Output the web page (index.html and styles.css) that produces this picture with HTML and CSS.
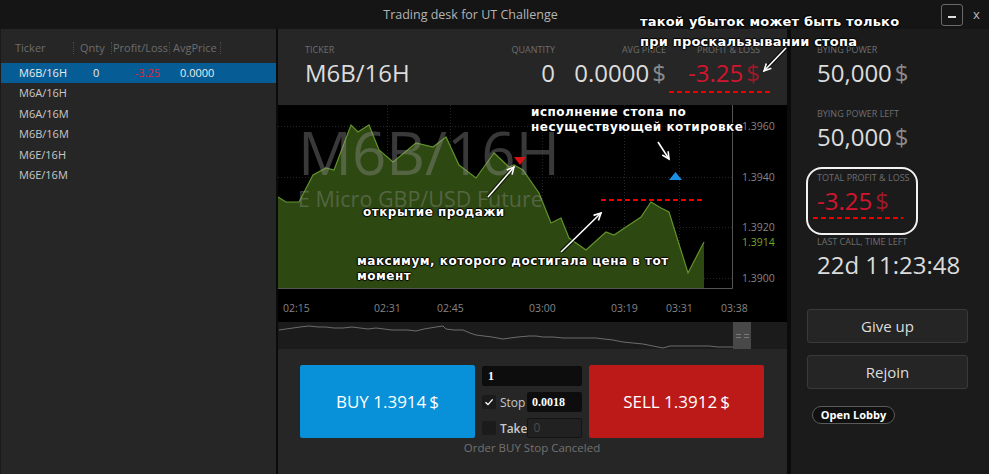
FILE: index.html
```html
<!DOCTYPE html>
<html>
<head>
  <meta charset="utf-8">
  <title>Trading desk for UT Challenge</title>
  <link rel="stylesheet" href="styles.css">
</head>
<body>
  <div class="window">
    <div class="titlebar">
      <span class="title">Trading desk for UT Challenge</span>
      <div class="win-buttons">
        <span class="win-min"><i></i></span>
        <span class="win-close">x</span>
      </div>
    </div>

    <div class="main">
      <!-- ticker list -->
      <aside class="tickers">
        <div class="tk-head">
          <span class="c-ticker">Ticker</span>
          <span class="c-qnty">Qnty</span>
          <span class="c-pl">Profit/Loss</span>
          <span class="c-avg">AvgPrice</span>
        </div>
        <div class="tk-row selected">
          <span class="c-ticker">M6B/16H</span>
          <span class="c-qnty">0</span>
          <span class="c-pl loss">-3.25</span>
          <span class="c-avg">0.0000</span>
        </div>
        <div class="tk-row"><span class="c-ticker">M6A/16H</span></div>
        <div class="tk-row"><span class="c-ticker">M6A/16M</span></div>
        <div class="tk-row"><span class="c-ticker">M6B/16M</span></div>
        <div class="tk-row"><span class="c-ticker">M6E/16H</span></div>
        <div class="tk-row"><span class="c-ticker">M6E/16M</span></div>
      </aside>

      <!-- desk -->
      <section class="desk">
        <div class="summary">
          <div class="field f-ticker">
            <div class="label">Ticker</div>
            <div class="value">M6B/16H</div>
          </div>
          <div class="field f-qty">
            <div class="label">Quantity</div>
            <div class="value">0</div>
          </div>
          <div class="field f-avg">
            <div class="label">Avg price</div>
            <div class="value">0.0000<span class="cur">$</span></div>
          </div>
          <div class="field f-pl">
            <div class="label">Profit &amp; loss</div>
            <div class="value loss">-3.25<span class="cur">$</span></div>
          </div>
        </div>

        <div class="chart">
          <svg class="chart-svg" width="509" height="217" viewBox="0 0 509 217">
            <g class="grid">
              <line x1="0" y1="21.5" x2="454" y2="21.5"/>
              <line x1="0" y1="72.5" x2="454" y2="72.5"/>
              <line x1="0" y1="122.5" x2="454" y2="122.5"/>
              <line x1="0" y1="173.5" x2="454" y2="173.5"/>
              <line x1="109.5" y1="0" x2="109.5" y2="183"/>
              <line x1="172.5" y1="0" x2="172.5" y2="183"/>
              <line x1="264.5" y1="0" x2="264.5" y2="183"/>
              <line x1="346.5" y1="0" x2="346.5" y2="183"/>
              <line x1="401.5" y1="0" x2="401.5" y2="183"/>
            </g>
            <path class="area" d="M0,92 L8,97 L21,97 L35,70 L48,63 L56,65 L73,20 L80,27 L91,20 L101,45 L115,57 L126,48 L138,38 L155,42 L168,32 L181,60 L198,73 L216,48 L231,62 L236,60 L245,65 L261,88 L273,118 L283,113 L291,133 L308,145 L328,127 L336,130 L351,120 L363,112 L373,97 L383,103 L391,107 L410,168 L426,137 L426,183 L0,183 Z"/>
            <polyline class="line" points="0,92 8,97 21,97 35,70 48,63 56,65 73,20 80,27 91,20 101,45 115,57 126,48 138,38 155,42 168,32 181,60 198,73 216,48 231,62 236,60 245,65 261,88 273,118 283,113 291,133 308,145 328,127 336,130 351,120 363,112 373,97 383,103 391,107 410,168 426,137"/>
            <text class="mark-big" x="20" y="70">M6B/16H</text>
            <text class="mark-sub" x="20" y="102">E Micro GBP/USD Future</text>
            <polygon class="sell-mark" points="236,52 248,52 242,60"/>
            <polygon class="buy-mark" points="391,75 404,75 397.5,67"/>
            <path class="frame" d="M454.5,0 V183.5 H0"/>
            <g class="axis">
              <text x="464" y="25">1.3960</text>
              <text x="464" y="76">1.3940</text>
              <text x="464" y="126">1.3920</text>
              <text class="last" x="464" y="141">1.3914</text>
              <text x="464" y="177">1.3900</text>
            </g>
            <g class="axis">
              <text x="5" y="207">02:15</text>
              <text x="96" y="207">02:31</text>
              <text x="159" y="207">02:45</text>
              <text x="251" y="207">03:00</text>
              <text x="333" y="207">03:19</text>
              <text x="388" y="207">03:31</text>
              <text x="443" y="207">03:38</text>
            </g>
          </svg>
        </div>

        <div class="navigator">
          <svg width="509" height="27" viewBox="0 0 509 27">
            <polyline class="nav-line" points="1,8 8,7 15,6 22,5 31,4 40,5 48,5 56,6 65,6 74,5 82,6 90,7 98,6 106,7 114,8 122,8 130,8 138,9 146,7 152,6 158,5 165,4 168,7 176,8 185,8 192,11 198,13 206,14 214,15 225,17 232,16 240,15 251,14 258,14 265,15 275,15 285,16 295,16 305,16 318,16 326,17 335,18 345,20 355,21 365,22 375,24 385,26 392,24 398,24 405,24 411,24 420,24 431,24 440,25 448,25 455,25 460,23 463,26"/>
            <rect class="nav-handle" x="455" y="0" width="18" height="27"/>
            <g class="nav-grip">
              <line x1="458" y1="12.5" x2="463" y2="12.5"/>
              <line x1="458" y1="15.5" x2="463" y2="15.5"/>
              <line x1="466" y1="12.5" x2="471" y2="12.5"/>
              <line x1="466" y1="15.5" x2="471" y2="15.5"/>
            </g>
          </svg>
        </div>

        <div class="order">
          <div class="order-row">
            <div class="trade-btn buy">BUY 1.3914<span class="cur">$</span></div>
            <div class="ticket">
              <div class="in qty-in">1</div>
              <div class="opt">
                <span class="check on">
                  <svg width="10" height="10" viewBox="0 0 10 10"><path d="M1.5,5.2 L4,7.6 L8.6,2.4" fill="none" stroke="#fff" stroke-width="1.4"/></svg>
                </span>
                <span class="opt-label">Stop</span>
                <div class="in small">0.0018</div>
              </div>
              <div class="opt">
                <span class="check"></span>
                <span class="opt-label bold">Take</span>
                <div class="in small off">0</div>
              </div>
            </div>
            <div class="trade-btn sell">SELL 1.3912<span class="cur">$</span></div>
          </div>
          <div class="status">Order BUY Stop Canceled</div>
        </div>
      </section>

      <!-- account -->
      <aside class="account">
        <div class="stat">
          <div class="label">Bying power</div>
          <div class="value">50,000<span class="cur">$</span></div>
        </div>
        <div class="stat">
          <div class="label">Bying power left</div>
          <div class="value">50,000<span class="cur">$</span></div>
        </div>
        <div class="stat">
          <div class="label">Total profit &amp; loss</div>
          <div class="value loss">-3.25<span class="cur">$</span></div>
        </div>
        <div class="stat">
          <div class="label">Last call, time left</div>
          <div class="value">22d 11:23:48</div>
        </div>
        <div class="actions">
          <div class="act-btn">Give up</div>
          <div class="act-btn">Rejoin</div>
          <div class="lobby">Open Lobby</div>
        </div>
      </aside>
    </div>

    <!-- annotations drawn over the screenshot -->
    <div class="notes">
      <svg class="notes-svg" width="989" height="474" viewBox="0 0 989 474">
        <defs>
          <marker id="head" markerWidth="10" markerHeight="10" refX="8" refY="5" orient="auto" markerUnits="userSpaceOnUse">
            <path d="M1,1.5 L8,5 L1,8.5" fill="none" stroke="#fff" stroke-width="1.6"/>
          </marker>
        </defs>
        <g class="shadow">
          <line x1="786" y1="48" x2="764" y2="71"/>
          <line x1="488" y1="197" x2="514" y2="167"/>
          <line x1="658" y1="142" x2="669" y2="159"/>
          <line x1="561" y1="252" x2="601" y2="213"/>
        </g>
        <g class="arrows">
          <line x1="786" y1="48" x2="764" y2="71" marker-end="url(#head)"/>
          <line x1="488" y1="197" x2="514" y2="167" marker-end="url(#head)"/>
          <line x1="658" y1="142" x2="669" y2="159" marker-end="url(#head)"/>
          <line x1="561" y1="252" x2="601" y2="213" marker-end="url(#head)"/>
        </g>
        <g class="dashes">
          <line x1="669" y1="92" x2="770" y2="92"/>
          <line x1="601" y1="200" x2="703" y2="200"/>
          <line x1="813" y1="218" x2="903" y2="218"/>
        </g>
        <rect class="ring" x="807" y="168" width="110" height="66" rx="15"/>
      </svg>
      <div class="note n-slip">такой убыток может быть только<br>при проскальзывании стопа</div>
      <div class="note n-stop">исполнение стопа по<br>несуществующей котировке</div>
      <div class="note n-open">открытие продажи</div>
      <div class="note n-max">максимум, которого достигала цена в тот<br>момент</div>
    </div>
  </div>
</body>
</html>
```

FILE: styles.css
```css
* {
  box-sizing: border-box;
}

body {
  margin: 0;
  background-color: #0b0b0b;
  font-family: "Open Sans", "Liberation Sans", sans-serif;
  color: #dddddd;
}

.window {
  position: relative;
  width: 989px;
  height: 474px;
  overflow: hidden;
  background-color: #0b0b0b;
}

/* title bar */
.titlebar {
  height: 29px;
  display: flex;
  align-items: center;
  background-color: #151515;
}

.title {
  flex: 1;
  text-align: center;
  font-size: 12.5px;
  color: #b4b4b4;
}

.win-buttons {
  width: 48px;
  display: flex;
  align-items: center;
  gap: 10px;
}

.win-min {
  width: 22px;
  height: 22px;
  border: 1px solid #6a6a6a;
  border-radius: 3px;
  display: flex;
  align-items: center;
  justify-content: center;
}

.win-min i {
  width: 8px;
  height: 2px;
  margin-top: 4px;
  background-color: #dddddd;
}

.win-close {
  font-size: 13px;
  color: #bbbbbb;
  margin-top: -2px;
}

.main {
  display: flex;
  height: 445px;
}

/* ticker list */
.tickers {
  width: 276px;
  background-color: #262626;
  border-left: 1px solid #1a1a1a;
}

.tk-head {
  display: flex;
  align-items: center;
  height: 34px;
  padding-top: 4px;
  font-size: 11px;
  color: #6c6c6c;
}

.tk-head span {
  height: 12px;
  line-height: 12px;
  border-right: 1px dotted #4a4a4a;
}

.c-ticker { width: 73px; padding-left: 14px; }
.c-qnty { width: 38px; padding-left: 6px; }
.c-pl { width: 58px; padding-left: 1px; }
.c-avg { width: 51px; padding-left: 3px; }

.tk-row {
  display: flex;
  height: 20.4px;
  line-height: 20.4px;
  font-size: 11px;
  color: #c8c8c8;
}

.tk-row .c-ticker { padding-left: 18px; }
.tk-row .c-qnty { padding-left: 19px; }
.tk-row .c-pl { text-align: right; padding-right: 10px; }
.tk-row .c-avg { padding-left: 10px; }

.tk-row.selected {
  background-color: #065d95;
  color: #ececec;
}

.loss {
  color: #d2152e;
}

.tk-row .loss {
  color: #e0223a;
}

/* center desk */
.desk {
  width: 509px;
  margin-left: 2px;
  display: flex;
  flex-direction: column;
}

.summary {
  height: 76px;
  display: flex;
  padding: 15px 27px 0 27px;
  background-color: #262626;
}

.label {
  font-size: 9px;
  line-height: 12px;
  color: #6e6e6e;
  text-transform: uppercase;
  white-space: nowrap;
}

.value {
  font-size: 24px;
  line-height: 30px;
  margin-top: 2px;
  color: #dcdcdc;
  white-space: nowrap;
}

.cur {
  margin-left: 3px;
  color: #8a8a8a;
}

.value.loss {
  color: #d2152e;
}

.value.loss .cur {
  color: #9a1a2a;
}

.f-ticker { flex: 1; }
.f-qty { width: 50px; text-align: right; }
.f-avg { width: 111px; text-align: right; }
.f-pl { width: 94px; text-align: right; }

.chart {
  height: 217px;
  background-color: #000000;
}

.chart-svg {
  display: block;
}

.grid line {
  stroke: #262626;
  stroke-width: 1;
  stroke-dasharray: 1 2;
}

.area {
  fill: #2e4812;
}

.line {
  fill: none;
  stroke: #63932c;
  stroke-width: 1.2;
}

.mark-big {
  font-family: "Open Sans", sans-serif;
  font-size: 60px;
  fill: rgba(150, 150, 150, 0.38);
}

.mark-sub {
  font-family: "Open Sans", sans-serif;
  font-size: 21.5px;
  fill: rgba(150, 150, 150, 0.38);
}

.sell-mark { fill: #d41414; }
.buy-mark { fill: #1b8fe2; }

.frame {
  fill: none;
  stroke: #555555;
  stroke-width: 1;
}

.axis text {
  font-family: "Open Sans", sans-serif;
  font-size: 10.5px;
  fill: #858585;
}

.axis .last {
  fill: #74a628;
}

.navigator {
  height: 27px;
  background-color: #1b1b1b;
}

.navigator svg {
  display: block;
}

.nav-line {
  fill: none;
  stroke: #6c6c6c;
  stroke-width: 1;
}

.nav-handle {
  fill: #484848;
}

.nav-grip line {
  stroke: #7a7a7a;
  stroke-width: 1;
}

/* order ticket */
.order {
  flex: 1;
  padding: 16px 23px 0 22px;
  background-color: #262626;
}

.order-row {
  display: flex;
  gap: 7px;
}

.trade-btn {
  width: 175px;
  height: 73px;
  display: flex;
  align-items: center;
  justify-content: center;
  border-radius: 2px;
  font-size: 17px;
  color: #ffffff;
}

.trade-btn .cur {
  color: #ffffff;
}

.buy { background-color: #0890d8; }
.sell { background-color: #bc1919; }

.ticket {
  width: 100px;
  padding-top: 1px;
  display: flex;
  flex-direction: column;
  gap: 6px;
}

.in {
  height: 20px;
  line-height: 20px;
  padding-left: 6px;
  background-color: #0d0d0d;
  border-radius: 2px;
  font-family: "Liberation Serif", serif;
  font-weight: bold;
  font-size: 12px;
  color: #ffffff;
}

.opt {
  display: flex;
  align-items: center;
  height: 20px;
}

.check {
  width: 14px;
  height: 14px;
  border-radius: 2px;
  background-color: #1b1b1b;
  display: flex;
  align-items: center;
  justify-content: center;
}

.opt-label {
  flex: 1;
  padding-left: 4px;
  font-size: 12px;
  color: #c8c8c8;
}

.opt-label.bold {
  font-weight: 600;
}

.in.small {
  width: 55px;
  padding-left: 5px;
}

.in.off {
  background-color: #212121;
  border: 1px solid #141414;
  line-height: 18px;
  font-family: "Open Sans", sans-serif;
  font-weight: normal;
  color: #4a4a4a;
}

.status {
  margin-top: 2px;
  text-align: center;
  font-size: 11.5px;
  line-height: 16px;
  color: #727272;
}

/* account */
.account {
  width: 198px;
  margin-left: 4px;
  padding: 15px 21px 0 16px;
  background-color: #1b1b1b;
}

.stat {
  padding-left: 10px;
  margin-bottom: 20px;
}

.actions {
  padding-top: 9px;
}

.act-btn {
  height: 34px;
  line-height: 32px;
  margin-bottom: 12px;
  text-align: center;
  font-size: 15px;
  color: #dddddd;
  background-color: #252525;
  border: 1px solid #3a3a3a;
  border-radius: 3px;
}

.lobby {
  display: inline-block;
  margin-left: 5px;
  margin-top: 5px;
  width: 83px;
  height: 18px;
  line-height: 16px;
  text-align: center;
  font-size: 11px;
  font-weight: bold;
  color: #ffffff;
  background-color: #101010;
  border: 1px solid #5a5a5a;
  border-radius: 9px;
}

/* annotations */
.notes {
  position: absolute;
  left: 0;
  top: 0;
  width: 989px;
  height: 474px;
  pointer-events: none;
}

.notes-svg {
  position: absolute;
  left: 0;
  top: 0;
}

.shadow line {
  stroke: rgba(0, 0, 0, 0.6);
  stroke-width: 4;
}

.arrows line {
  stroke: #ffffff;
  stroke-width: 1.6;
}

.dashes line {
  stroke: #ee0000;
  stroke-width: 2;
  stroke-dasharray: 5 3;
}

.ring {
  fill: none;
  stroke: #f2f2f2;
  stroke-width: 2;
}

.note {
  position: absolute;
  font-family: "DejaVu Sans", sans-serif;
  font-weight: bold;
  font-size: 12px;
  line-height: 15px;
  letter-spacing: 0.5px;
  color: #ffffff;
  white-space: nowrap;
  text-shadow: 1px 0 1px #000, -1px 0 1px #000, 0 1px 1px #000, 0 -1px 1px #000;
}

.n-slip {
  left: 640px;
  top: 12px;
  font-size: 13px;
  line-height: 20px;
  letter-spacing: 0.2px;
}

.n-stop {
  left: 531px;
  top: 105px;
}

.n-open {
  left: 363px;
  top: 205px;
}

.n-max {
  left: 357px;
  top: 254px;
}
```
